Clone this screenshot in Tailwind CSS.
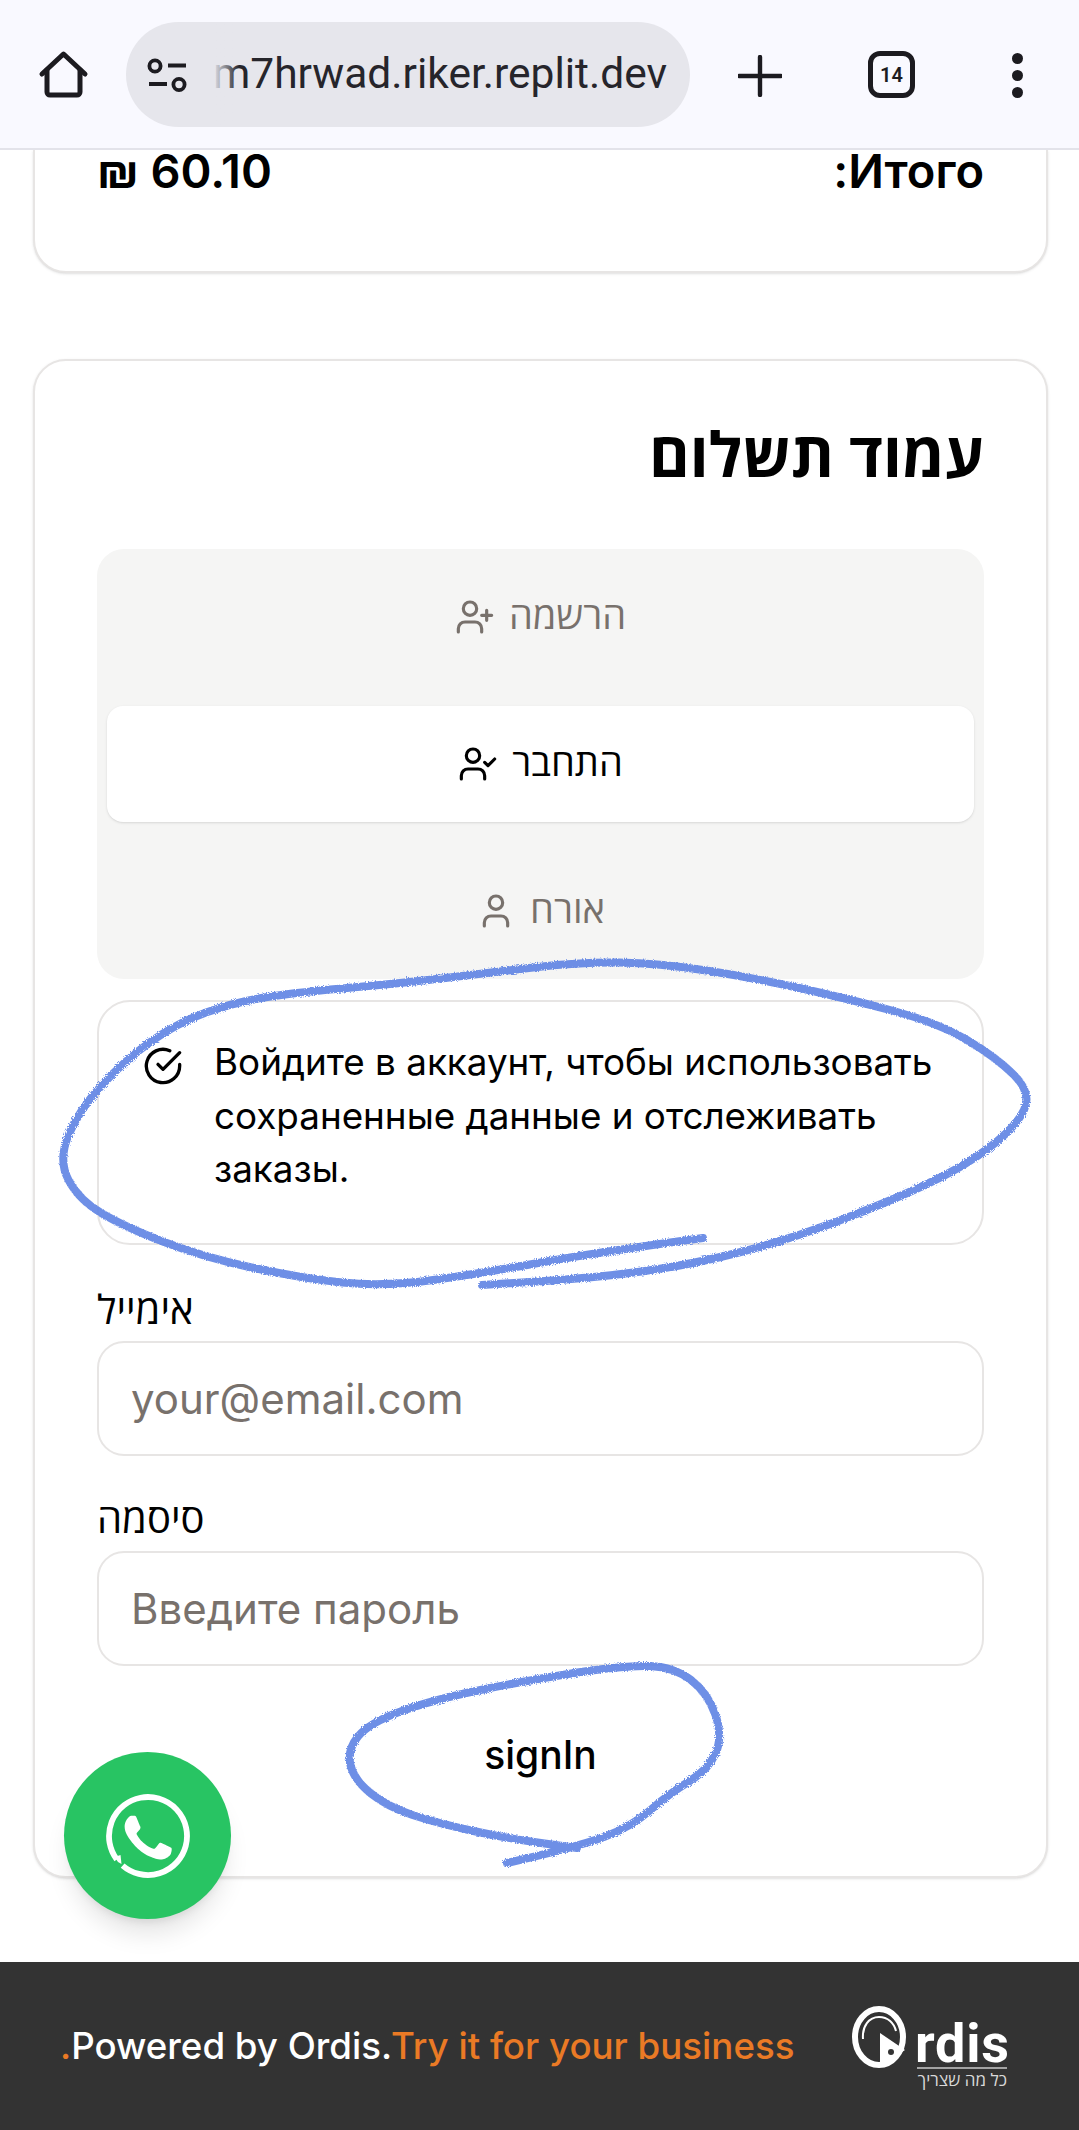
<!DOCTYPE html>
<html lang="he">
<head>
    <meta charset="UTF-8">
    <meta name="viewport" content="width=device-width, initial-scale=1.0">
    <title>Checkout</title>
    <script src="https://cdn.jsdelivr.net/npm/@tailwindcss/browser@4"></script>
</head>
<body class="bg-white font-['Inter','Open_Sans','Noto_Sans','Liberation_Sans',sans-serif] text-black">
<div class="relative w-[1079px] h-[2130px] overflow-hidden flex flex-col">

    <!-- browser bar -->
    <header class="h-[150px] shrink-0 bg-[#f9f9ff] border-b-[2px] border-[#e3e3ea] flex items-start relative">
        <svg class="absolute left-[38px] top-[50px] w-[51px] h-[51px]" viewBox="38 50 51 51" fill="none" stroke="#1c1b20" stroke-width="5" stroke-linecap="round" stroke-linejoin="round">
            <path d="M42 74 63.5 54 85 74"/>
            <path d="M47 70v22a3 3 0 0 0 3 3h27a3 3 0 0 0 3-3V70"/>
        </svg>
        <div class="absolute left-[126px] top-[22px] w-[564px] h-[105px] rounded-full bg-[#e6e6ec] flex items-center overflow-hidden">
            <svg class="ml-[20px] w-[44px] h-[36px] shrink-0" viewBox="0 0 44 36" fill="none" stroke="#1c1b20" stroke-width="3.8">
                <circle cx="9" cy="9" r="5.6"/>
                <path d="M22 8.5h18"/>
                <path d="M3 27h18"/>
                <circle cx="33" cy="27.5" r="5.6"/>
            </svg>
            <span class="ml-[23px] text-[42.5px] leading-none text-[#26252b] whitespace-nowrap font-['Roboto',sans-serif]">m7hrwad.riker.replit.dev</span>
            <span class="absolute left-[87px] top-0 w-[26px] h-full bg-gradient-to-r from-[#e6e6ec] to-transparent"></span>
        </div>
        <svg class="absolute left-[738px] top-[55px] w-[44px] h-[42px]" viewBox="0 0 44 42" fill="none" stroke="#1c1b20" stroke-width="4.4" stroke-linecap="round">
            <path d="M22 2v38M1 21h42"/>
        </svg>
        <div class="absolute left-[868px] top-[51px] w-[47px] h-[47px] rounded-[12px] border-[5px] border-[#1c1b20] flex items-center justify-center text-[20px] font-semibold text-[#1c1b20] font-['Roboto',sans-serif]">14</div>
        <div class="absolute left-[1012px] top-[53px] flex flex-col gap-[6px]">
            <span class="w-[11px] h-[11px] rounded-full bg-[#1c1b20]"></span>
            <span class="w-[11px] h-[11px] rounded-full bg-[#1c1b20]"></span>
            <span class="w-[11px] h-[11px] rounded-full bg-[#1c1b20]"></span>
        </div>
    </header>

    <!-- order summary (scrolled) -->
    <section class="ml-[33px] w-[1015px] h-[123px] shrink-0 border-x-[2px] border-b-[2px] border-[#e7e5e4] rounded-b-[33px] bg-white shadow-sm px-[62px] flex justify-between items-start">
        <span class="text-[47px] font-semibold leading-[44px] -mt-[1px]">₪ 60.10</span>
        <span class="text-[47px] font-semibold leading-[44px] -mt-[1px]" dir="rtl">Итого:</span>
    </section>

    <!-- payment card -->
    <main class="ml-[33px] mt-[86px] w-[1015px] h-[1519px] shrink-0 border-[2px] border-[#e7e5e4] rounded-[33px] bg-white shadow-sm px-[62px] flex flex-col">
        <h1 dir="rtl" class="mt-[60px] h-[68px] text-[62px] leading-[68px] font-bold">עמוד תשלום</h1>

        <div class="mt-[60px] h-[430px] rounded-[27px] bg-[#f5f5f4] p-[10px] flex flex-col gap-[31px] text-[38px] text-[#78716c]">
            <div class="h-[116px] flex items-center justify-center gap-[14px]">
                <svg class="w-[40px] h-[40px]" viewBox="0 0 24 24" fill="none" stroke="currentColor" stroke-width="1.9" stroke-linecap="round" stroke-linejoin="round"><path d="M16 21v-2a4 4 0 0 0-4-4H6a4 4 0 0 0-4 4v2"/><circle cx="9" cy="7" r="4"/><path d="M19 8v6M22 11h-6"/></svg>
                <span class="-translate-y-[2px]">הרשמה</span>
            </div>
            <div class="h-[116px] rounded-[16px] bg-white shadow-sm text-black flex items-center justify-center gap-[14px]">
                <svg class="w-[40px] h-[40px]" viewBox="0 0 24 24" fill="none" stroke="currentColor" stroke-width="1.9" stroke-linecap="round" stroke-linejoin="round"><path d="M16 21v-2a4 4 0 0 0-4-4H6a4 4 0 0 0-4 4v2"/><circle cx="9" cy="7" r="4"/><path d="m16 11 2 2 4-4"/></svg>
                <span class="-translate-y-[2px]">התחבר</span>
            </div>
            <div class="h-[116px] flex items-center justify-center gap-[14px]">
                <svg class="w-[40px] h-[40px]" viewBox="0 0 24 24" fill="none" stroke="currentColor" stroke-width="1.9" stroke-linecap="round" stroke-linejoin="round"><path d="M19 21v-2a4 4 0 0 0-4-4H9a4 4 0 0 0-4 4v2"/><circle cx="12" cy="7" r="4"/></svg>
                <span class="-translate-y-[2px]">אורח</span>
            </div>
        </div>

        <div class="mt-[21px] h-[245px] shrink-0 rounded-[33px] border-[2px] border-[#e7e5e4] pl-[44px] pr-[30px] pt-[33px] flex gap-[31px]">
            <svg class="w-[40px] h-[40px] mt-[11px] shrink-0" viewBox="0 0 24 24" fill="none" stroke="currentColor" stroke-width="2" stroke-linecap="round" stroke-linejoin="round"><path d="M22 11.08V12a10 10 0 1 1-5.93-9.14"/><path d="M22 4 12 14.01l-3-3"/></svg>
            <p class="text-[36.8px] leading-[53.5px]">Войдите в аккаунт, чтобы использовать сохраненные данные и отслеживать заказы.</p>
        </div>

        <label class="h-[96px] flex items-end pb-[9px] text-[40px] leading-[44px]">אימייל</label>
        <input type="text" placeholder="your@email.com" class="h-[115px] shrink-0 rounded-[27px] border-[2px] border-[#e7e5e4] px-[32px] text-[42px] placeholder:text-[#78716c] outline-none">

        <label class="h-[95px] flex items-end pb-[10px] text-[40px] leading-[44px]">סיסמה</label>
        <input type="password" placeholder="Введите пароль" class="h-[115px] shrink-0 rounded-[27px] border-[2px] border-[#e7e5e4] px-[32px] text-[42px] placeholder:text-[#78716c] outline-none">

        <button class="mt-[48px] h-[82px] text-[39px] font-medium text-center">signIn</button>
    </main>

    <!-- footer -->
    <footer class="mt-[84px] h-[168px] shrink-0 bg-[#333333] flex items-start justify-between pl-[60px] pr-[72px] font-medium">
        <p class="mt-[61px] text-[36.7px] leading-[46px] text-white whitespace-nowrap"><span class="text-[#ea7a25]">.</span>Powered by Ordis.<span class="text-[#ea7a25]">Try it for your business</span></p>
        <div class="relative mt-[44px] w-[155px] h-[88px]">
            <svg class="absolute left-0 top-0 w-[54px] h-[62px]" viewBox="0 0 54 62" fill="none">
                <ellipse cx="27" cy="31" rx="24" ry="28" stroke="white" stroke-width="6"/>
                <path d="M11 33C10 20 17 11 27 11c9 0 15 6 17 14" stroke="white" stroke-width="2"/>
                <path d="M28 27 53 44 28 61z" fill="white"/>
                <circle cx="39" cy="46" r="3" fill="#333333"/>
            </svg>
            <span class="absolute left-[63px] top-[9px] text-[54px] leading-[58px] font-bold text-white tracking-[0.8px] font-['Roboto',sans-serif]">rdis</span>
            <div class="absolute left-[65px] right-0 top-[61px] h-[2px] bg-[#a3a3a3]"></div>
            <span dir="rtl" class="absolute left-[65px] right-0 top-[63px] text-[17px] leading-[22px] text-[#d9d9d9] whitespace-nowrap">כל מה שצריך</span>
        </div>
    </footer>

    <!-- whatsapp button -->
    <div class="absolute left-[64px] top-[1752px] w-[167px] h-[167px] rounded-full bg-[#28c463] shadow-xl flex items-center justify-center">
        <svg class="w-[84px] h-[84px]" viewBox="0 0 84 84" fill="none">
            <path d="M10.8 65.4A39 39 0 1 1 16.6 71.6" stroke="white" stroke-width="5.8"/>
            <polygon points="8.5,63 14.5,61 15.5,70 12,68" fill="white"/>
            <g transform="translate(42 42) scale(3.9) translate(-12 -11.6)">
                <path fill="white" d="M17.472 14.382c-.297-.149-1.758-.867-2.03-.967-.273-.099-.471-.148-.67.15-.197.297-.767.966-.94 1.164-.173.199-.347.223-.644.075-.297-.15-1.255-.463-2.39-1.475-.883-.788-1.48-1.761-1.653-2.059-.173-.297-.018-.458.13-.606.134-.133.298-.347.446-.52.149-.174.198-.298.298-.497.099-.198.05-.371-.025-.52-.075-.149-.669-1.612-.916-2.207-.242-.579-.487-.5-.669-.51-.173-.008-.371-.01-.57-.01-.198 0-.52.074-.792.372-.272.297-1.04 1.016-1.04 2.479 0 1.462 1.065 2.875 1.213 3.074.149.198 2.096 3.2 5.077 4.487.709.306 1.262.489 1.694.625.712.227 1.36.195 1.871.118.571-.085 1.758-.719 2.006-1.413.248-.694.248-1.289.173-1.413-.074-.124-.272-.198-.57-.347"/>
            </g>
        </svg>
    </div>

    <!-- hand drawn marks over the page -->
    <svg class="absolute left-0 top-0 w-[1079px] h-[2130px] pointer-events-none" viewBox="0 0 1079 2130" fill="none" stroke="#5a7fe3" stroke-width="8" stroke-linecap="round" stroke-linejoin="round" stroke-opacity="0.88">
        <defs>
            <filter id="grain" x="0" y="0" width="100%" height="100%" filterUnits="userSpaceOnUse">
                <feTurbulence type="fractalNoise" baseFrequency="0.9" numOctaves="2" seed="4"/>
                <feDisplacementMap in="SourceGraphic" scale="4"/>
            </filter>
        </defs>
        <g filter="url(#grain)">
            <path id="mark1"/>
            <path id="mark2"/>
        </g>
    </svg>
</div>

<script>
    function smooth(pts) {
        let d = 'M' + pts[0].join(' ');
        for (let i = 1; i < pts.length - 1; i++) {
            const mx = (pts[i][0] + pts[i + 1][0]) / 2;
            const my = (pts[i][1] + pts[i + 1][1]) / 2;
            d += ` Q${pts[i][0]} ${pts[i][1]} ${mx} ${my}`;
        }
        return d + ' L' + pts[pts.length - 1].join(' ');
    }
    document.getElementById('mark1').setAttribute('d', smooth([
        [703,1238],[593,1253],[489,1272],[385,1287],[300,1278],[203,1257],[125,1227],[79,1200],[58,1160],[79,1110],
        [125,1060],[177,1023],[235,1002],[300,992],[404,983],[495,972],[580,962],[658,963],[755,978],[853,1000],
        [938,1023],[996,1057],[1032,1093],[1016,1127],[964,1167],[886,1203],[788,1240],[690,1265],[593,1278],[482,1285]
    ]));
    document.getElementById('mark2').setAttribute('d', smooth([
        [507,1863],[577,1847],[631,1827],[670,1793],[708,1770],[723,1737],[708,1693],[674,1667],[626,1665],[529,1680],
        [432,1700],[369,1723],[347,1750],[354,1780],[388,1807],[437,1823],[505,1838],[577,1848]
    ]));
</script>
</body>
</html>
